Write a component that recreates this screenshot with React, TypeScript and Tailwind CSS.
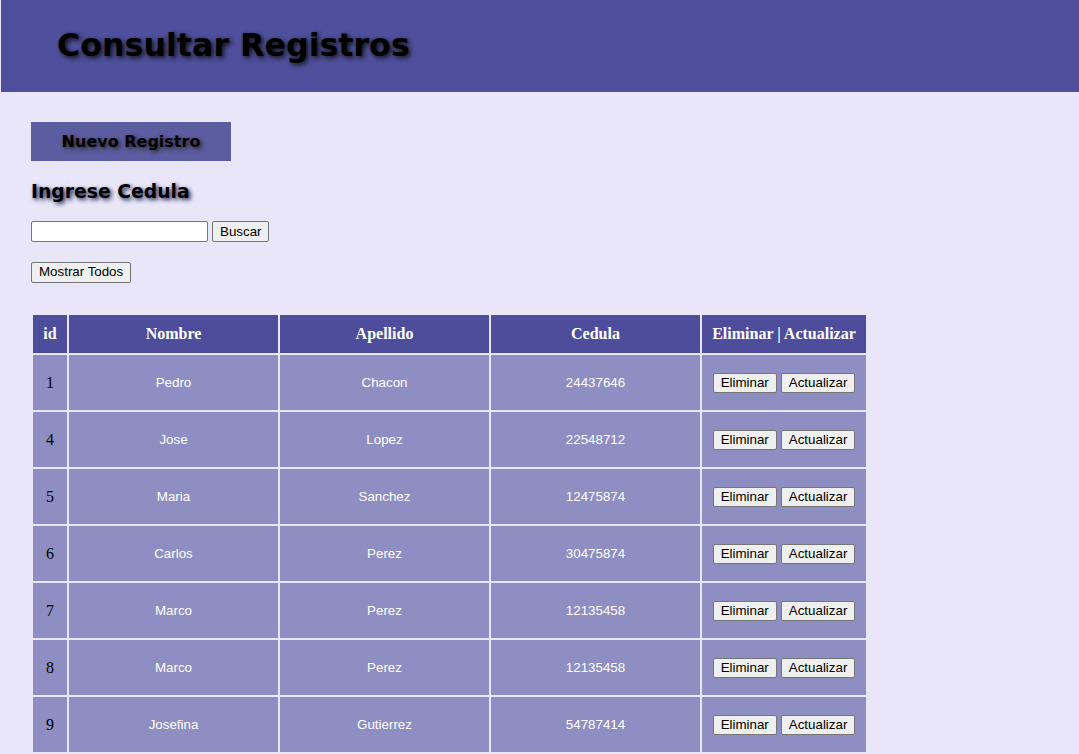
import React from 'react';

interface Registro {
  id: number;
  nombre: string;
  apellido: string;
  cedula: string;
}

const registros: Registro[] = [
  { id: 1, nombre: 'Pedro', apellido: 'Chacon', cedula: '24437646' },
  { id: 4, nombre: 'Jose', apellido: 'Lopez', cedula: '22548712' },
  { id: 5, nombre: 'Maria', apellido: 'Sanchez', cedula: '12475874' },
  { id: 6, nombre: 'Carlos', apellido: 'Perez', cedula: '30475874' },
  { id: 7, nombre: 'Marco', apellido: 'Perez', cedula: '12135458' },
  { id: 8, nombre: 'Marco', apellido: 'Perez', cedula: '12135458' },
  { id: 9, nombre: 'Josefina', apellido: 'Gutierrez', cedula: '54787414' },
];

const btn =
  "bg-[#efefef] border border-[#767676] rounded-[2px] px-[7px] py-px text-[13.33px] leading-[16px] text-black font-['Liberation_Sans',Arial,sans-serif]";

export default function App() {
  return (
    <div className="min-h-[754px] bg-[#e8e6f8] font-['DejaVu_Sans',Verdana,sans-serif]">
      {/* Header */}
      <div className="h-[92px] bg-[#4f4f9d] flex items-center pl-[56px] ml-px">
        <h1 className="text-[31.7px] font-bold text-black [text-shadow:2px_2px_5px_#111]">
          Consultar Registros
        </h1>
      </div>

      <div className="pl-[31px] pt-[30px]">
        <div className="w-[200px] h-[39px] bg-[#5c5ca0] flex items-center justify-center">
          <span className="text-[16px] font-bold text-black [text-shadow:2px_2px_4px_#222]">
            Nuevo Registro
          </span>
        </div>

        <h2 className="mt-[19px] text-[18.8px] leading-[23px] font-bold text-black [text-shadow:2px_2px_4px_#1a1a4a]">
          Ingrese Cedula
        </h2>

        <div className="mt-[18px] flex items-center gap-[4px]">
          <input
            type="text"
            className="w-[177px] h-[21px] bg-white border border-[#767676] rounded-[2px] px-[2px] text-[13.33px]"
          />
          <button className={`${btn} h-[21px]`}>Buscar</button>
        </div>

        <div className="mt-[17px] h-[21px]">
          <button className={`${btn} h-[21px]`}>Mostrar Todos</button>
        </div>

        <table className="mt-[33px] border-separate border-spacing-[2px] table-fixed w-[837px]">
          <thead>
            <tr className="font-['Liberation_Serif','Times_New_Roman',serif] text-[16px] font-bold text-white">
              <th className="w-[34px] h-[38px] bg-[#4d4d9b]">id</th>
              <th className="w-[209px] bg-[#4d4d9b]">Nombre</th>
              <th className="w-[209px] bg-[#4d4d9b]">Apellido</th>
              <th className="w-[209px] bg-[#4d4d9b]">Cedula</th>
              <th className="w-[164px] bg-[#4d4d9b]">Eliminar | Actualizar</th>
            </tr>
          </thead>
          <tbody>
            {registros.map((r, i) => (
              <tr key={i} className="text-[13.33px] text-white font-['Liberation_Sans',Arial,sans-serif]">
                <td className="h-[55px] bg-[#8e8ec2] text-center text-black text-[16px] font-['Liberation_Serif','Times_New_Roman',serif]">
                  {r.id}
                </td>
                <td className="bg-[#8e8ec2] text-center">{r.nombre}</td>
                <td className="bg-[#8e8ec2] text-center">{r.apellido}</td>
                <td className="bg-[#8e8ec2] text-center">{r.cedula}</td>
                <td className="bg-[#8e8ec2] text-center">
                  <div className="flex justify-center gap-[4px]">
                    <button className={`${btn} h-[20px]`}>Eliminar</button>
                    <button className={`${btn} h-[20px]`}>Actualizar</button>
                  </div>
                </td>
              </tr>
            ))}
          </tbody>
        </table>
      </div>
    </div>
  );
}
